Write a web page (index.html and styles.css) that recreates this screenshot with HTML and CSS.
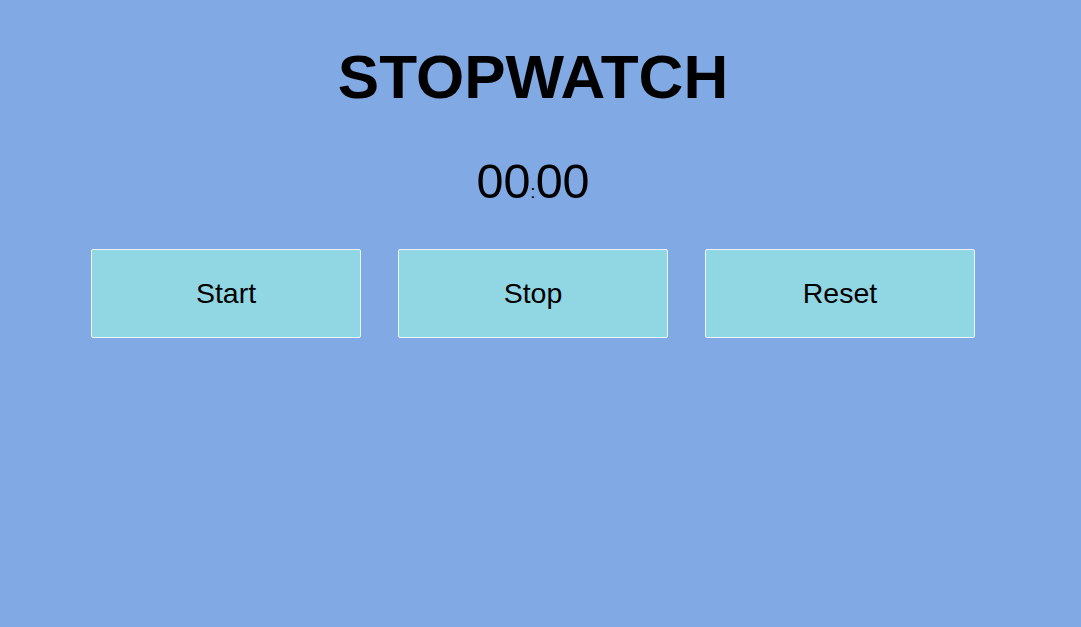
FILE: index.html
```html
<!DOCTYPE html>
<html>
<head>
<meta charset="utf-8">
<title>Stopwatch</title>
<link rel="stylesheet" href="styles.css">
</head>
<body>
<main class="app">
  <h1 class="title">STOPWATCH</h1>
  <div class="timer"><span class="num">00</span><span class="colon">:</span><span class="num">00</span></div>
  <div class="controls">
    <button class="btn">Start</button>
    <button class="btn">Stop</button>
    <button class="btn">Reset</button>
  </div>
</main>
</body>
</html>
```

FILE: styles.css
```css
html, body {
  margin: 0;
  padding: 0;
  height: 100%;
  background: #81a9e3;
}
body {
  font-family: "Liberation Sans", Arial, sans-serif;
  color: #000;
}
.app {
  display: flex;
  flex-direction: column;
  align-items: center;
  padding: 46px 15px 0 0;
}
.title {
  margin: 0;
  font-size: 62px;
  line-height: 62px;
  font-weight: bold;
}
.timer {
  margin-top: 49px;
  font-size: 48.5px;
  line-height: 48px;
  height: 48px;
}
.colon {
  font-size: 19px;
}
.controls {
  display: flex;
  gap: 37px;
  margin-top: 44px;
}
.btn {
  width: 270px;
  height: 89px;
  box-sizing: border-box;
  border: 1px solid #eef6fb;
  border-radius: 2px;
  background: #91d7e3;
  font-family: "Liberation Sans", Arial, sans-serif;
  font-size: 28.5px;
  color: #000;
  padding: 0;
  cursor: pointer;
}
```
